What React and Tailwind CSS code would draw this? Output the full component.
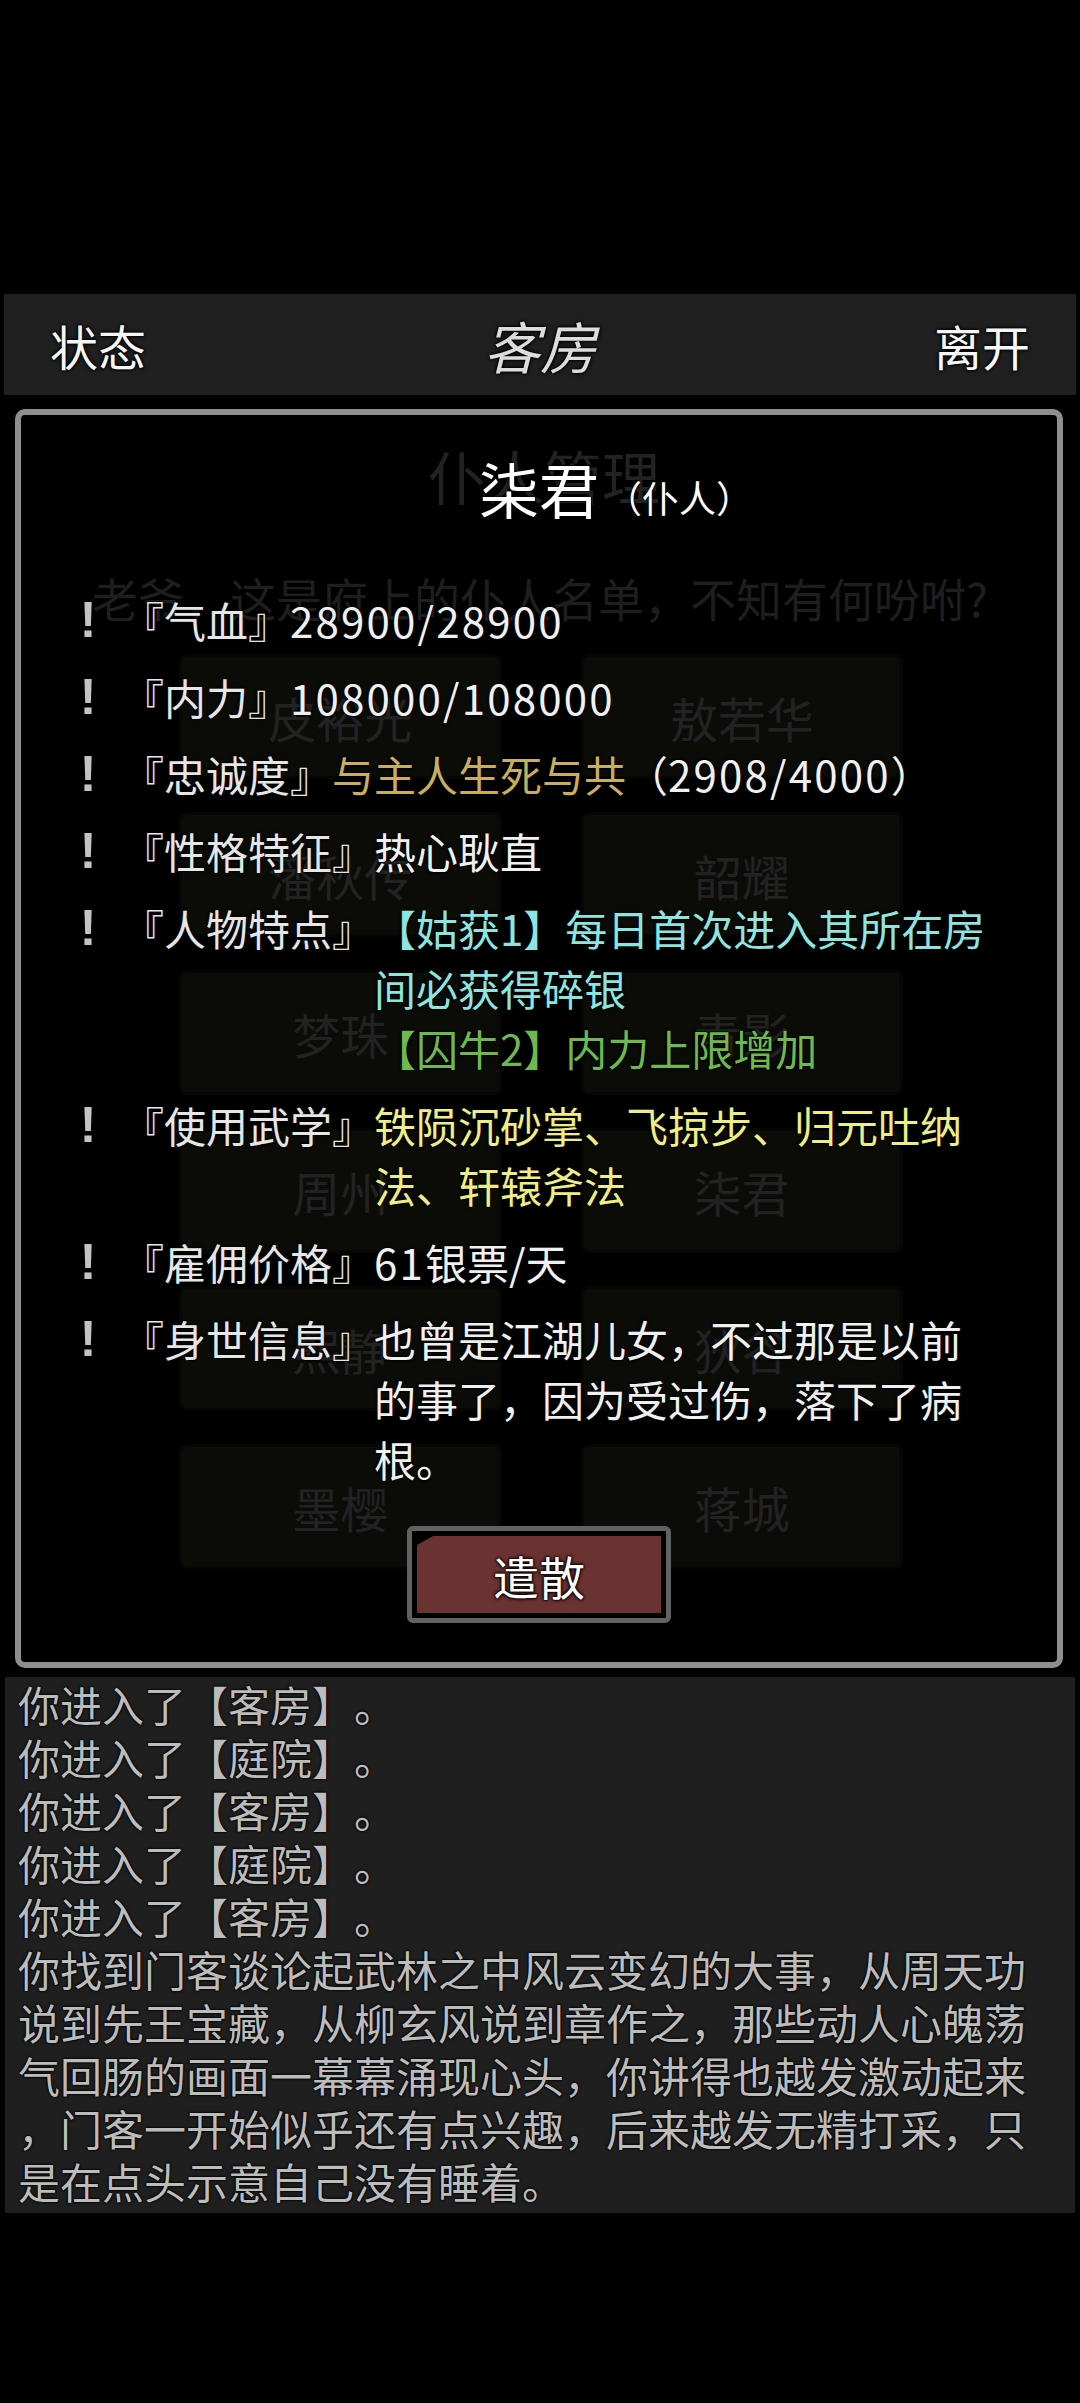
const outline = '[text-shadow:0_0_3px_#000,0_0_2px_#000,0_0_1px_#000]';

const servants = [
  ['皮裕光', '敖若华'],
  ['潘秋传', '韶耀'],
  ['梦珠', '青影'],
  ['周州', '柒君'],
  ['熙静', '狄谷'],
  ['墨樱', '蒋城'],
];

const logLines = [
  '你进入了【客房】。',
  '你进入了【庭院】。',
  '你进入了【客房】。',
  '你进入了【庭院】。',
  '你进入了【客房】。',
  '你找到门客谈论起武林之中风云变幻的大事，从周天功',
  '说到先王宝藏，从柳玄风说到章作之，那些动人心魄荡',
  '气回肠的画面一幕幕涌现心头，你讲得也越发激动起来',
  '，门客一开始似乎还有点兴趣，后来越发无精打采，只',
  '是在点头示意自己没有睡着。',
];

// digits in the game font run a little wider than Noto's
const Num = ({ children }) => <span className="tracking-[2.2px]">{children}</span>;

const InfoRow = ({ label, children }) => (
  <div className="flex items-start pl-[43px]">
    <span className={`w-12 shrink-0 text-center font-['Liberation_Sans',sans-serif] font-bold text-[50px] text-[#c4c4c4] ${outline}`}>!</span>
    <span className={`ml-[10px] shrink-0 text-[#e6e6e6] ${outline}`}>{label}</span>
    <div className={`w-[620px] text-[#f0f0f0] ${outline}`}>{children}</div>
  </div>
);

export default function App() {
  return (
    <div className="w-[1080px] h-[2403px] bg-black flex flex-col font-['Noto_Sans_CJK_SC','Noto_Sans',sans-serif] [text-spacing-trim:space-all] overflow-hidden">
      <div className="h-[294px] shrink-0" />

      {/* top bar */}
      <header className="mx-[4px] h-[101px] shrink-0 bg-[#202020] flex items-center justify-between px-[46px] text-[48px] leading-none">
        <span className="text-[#f6f6f6] [text-shadow:0_0_4px_#000,0_0_3px_#000,0_0_2px_#000]">状态</span>
        <span className="text-[56px] text-[#dcdcdc] italic [text-shadow:0_0_5px_#000,0_0_3px_#000,0_0_2px_#000]">客房</span>
        <span className="text-[#f6f6f6] [text-shadow:0_0_4px_#000,0_0_3px_#000,0_0_2px_#000]">离开</span>
      </header>

      {/* dimmed servant list behind the dialog */}
      <main className="relative h-[1282px] shrink-0">
        <div className="flex flex-col items-center pt-[45px]">
          <div className="text-[58px] leading-[70px] text-[#222222] pl-[8px]">仆人管理</div>
          <div className="mt-[58px] text-[46px] leading-[58px] text-[#1e1e1e]">老爷，这是府上的仆人名单，不知有何吩咐?</div>
        </div>
        <div className="ml-[179px] mt-[28px] w-[724px] grid grid-cols-2 gap-x-[79px] gap-y-[33px]">
          {servants.flat().map((n, i) => (
            <div key={i} className="h-[125px] rounded-[8px] bg-[#0b0b08] border-[3px] border-[#060605] flex items-center justify-center text-[48px] text-[#222222]">
              {n}
            </div>
          ))}
        </div>

        {/* dialog */}
        <div className="absolute top-[14px] left-[15px] w-[1048px] h-[1259px] border-[6px] border-[#8e8e8e] rounded-[10px] flex flex-col items-stretch text-[42px] leading-[60px]">
          <div className="pt-[33px] grid grid-cols-[1fr_auto_1fr] items-end">
            <span />
            <span className={`text-[60px] leading-[80px] text-white ${outline}`}>柒君</span>
            <span className={`ml-[6px] mb-[8px] text-[37px] leading-[46px] text-white ${outline}`}>（仆人）</span>
          </div>

          <div className="mt-[62px] flex flex-col gap-[17px]">
            <InfoRow label="『气血』"><Num>28900/28900</Num></InfoRow>
            <InfoRow label="『内力』"><Num>108000/108000</Num></InfoRow>
            <InfoRow label="『忠诚度』">
              <span className="text-[#c9af5b]">与主人生死与共</span>（<Num>2908/4000</Num>）
            </InfoRow>
            <InfoRow label="『性格特征』">热心耿直</InfoRow>
            <InfoRow label="『人物特点』">
              <div className="text-[#8ee4df]">【姑获1】每日首次进入其所在房间必获得碎银</div>
              <div className="text-[#6fb84e]">【囚牛2】内力上限增加</div>
            </InfoRow>
            <InfoRow label="『使用武学』">
              <span className="text-[#eeee84]">铁陨沉砂掌、飞掠步、归元吐纳法、轩辕斧法</span>
            </InfoRow>
            <InfoRow label="『雇佣价格』"><Num>61</Num>银票/天</InfoRow>
            <InfoRow label="『身世信息』">也曾是江湖儿女，不过那是以前的事了，因为受过伤，落下了病根。</InfoRow>
          </div>

          <div className="mt-[37px] flex justify-center">
            <button className="w-[264px] h-[97px] border-[5px] border-[#626262] rounded-[6px] bg-black p-[5px]">
              <div className="w-full h-full bg-[#6b3232] [clip-path:polygon(16px_0,100%_0,100%_100%,0_100%,0_9px)] flex items-center justify-center">
                <span className="text-[46px] leading-none text-white [text-shadow:0_0_4px_#000,0_0_3px_#000,0_0_2px_#000,0_0_1px_#000]">遣散</span>
              </div>
            </button>
          </div>
        </div>
      </main>

      {/* message log */}
      <section className="mx-[5px] h-[536px] shrink-0 bg-[#1f1f1f] pl-[13px] text-[42px] leading-[53px] text-[#bcbcbc]">
        {logLines.map((line, i) => (
          <div key={i} className={`whitespace-nowrap ${outline}`}>{line}</div>
        ))}
      </section>
    </div>
  );
}
